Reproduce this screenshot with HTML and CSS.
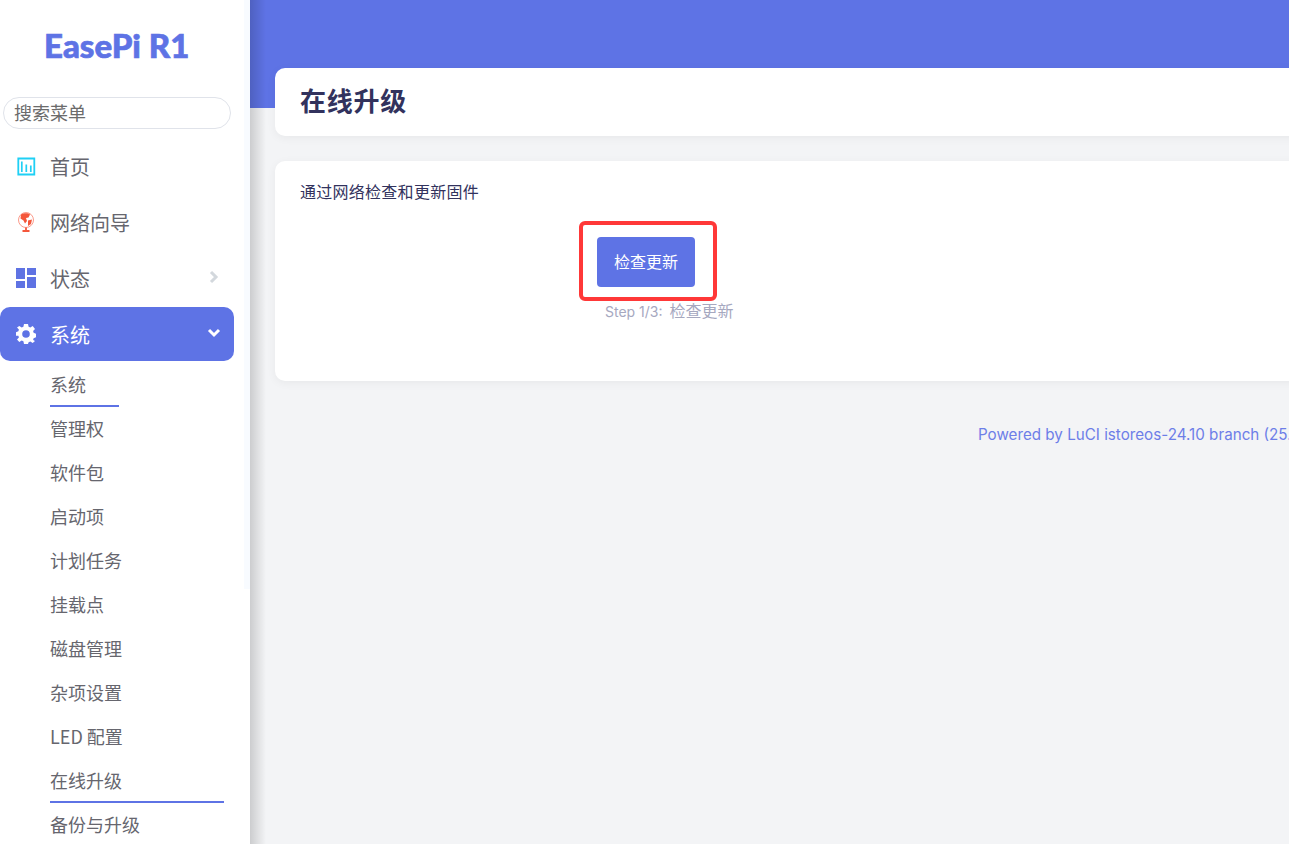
FILE: index.html
```html
<!DOCTYPE html>
<html lang="zh-CN">
<head>
<meta charset="utf-8">
<title>在线升级</title>
<link rel="stylesheet" href="styles.css">
</head>
<body>
<div class="app">
  <aside class="sidebar">
    <div class="brand">EasePi R1</div>
    <div class="search"><input class="search-input" type="text" placeholder="搜索菜单"></div>
    <nav class="menu">
      <a class="item"><span class="ico"><svg width="20" height="19" viewBox="-1.3 -0.5 20 19"><path d="M1 1h16v16H1z" fill="none" stroke="#1fd0f5" stroke-width="1.800"/><path d="M4.500 4v10.500M9 7v7.500M13.500 8v6.500" stroke="#1fd0f5" stroke-width="1.700"/></svg></span>首页</a>
      <a class="item"><span class="ico"><svg width="20" height="20" viewBox="0 0 20 20"><circle cx="10" cy="8" r="7.500" fill="#fff" stroke="#fc9a8a" stroke-width="1"/><path d="M5 2.500C8 .5 13 1 14 2.500L12.500 5.500 10 6l1 3-2 2.500-1.500-3-3-2z" fill="#f4573b"/><path d="M12 8.500l4-1-1 4.500-3 2z" fill="#f4573b"/><path d="M10 15.500v3M6.500 19h7" stroke="#f4573b" stroke-width="1.800"/></svg></span>网络向导</a>
      <a class="item"><span class="ico"><svg width="20" height="20" viewBox="0 0 20 20"><path d="M0 0h9v11H0zM11 0h9v7h-9zM0 13h9v7H0zM11 9h9v11h-9z" fill="#5f73e3"/></svg></span>状态<svg class="chev" width="10" height="14" viewBox="0 0 10 14"><path d="M2 2l5 5-5 5" fill="none" stroke="#d3d8dd" stroke-width="3"/></svg></a>
      <a class="item active"><span class="ico"><svg width="20" height="20" viewBox="0 0 20 20"><path fill="#fff" fill-rule="evenodd" d="M8 0h4l.6 2.800 1.700.7L16.700 2 19 5l-1.900 2.100.5 1.700 2.400.9v3.600l-2.400.9-.5 1.700L19 17l-2.300 2-2.400-1.500-1.700.7L12 20H8l-.6-2.800-1.700-.7L3.300 18 1 15.500l1.900-2.100-.5-1.700L0 11.800V8.200l2.400-.9.5-1.700L1 3.500 3.300 2l2.400 1.500 1.700-.7zM10 6.200a3.800 3.800 0 1 0 0 7.600 3.800 3.800 0 0 0 0-7.600z"/></svg></span>系统<svg class="chev down" width="14" height="10" viewBox="0 0 14 10"><path d="M2 2l5 5 5-5" fill="none" stroke="#fff" stroke-width="3"/></svg></a>
    </nav>
    <ul class="sub">
      <li class="short"><a>系统</a></li>
      <li><a>管理权</a></li>
      <li><a>软件包</a></li>
      <li><a>启动项</a></li>
      <li><a>计划任务</a></li>
      <li><a>挂载点</a></li>
      <li><a>磁盘管理</a></li>
      <li><a>杂项设置</a></li>
      <li><a>LED 配置</a></li>
      <li class="current"><a>在线升级</a></li>
      <li><a>备份与升级</a></li>
    </ul>
  </aside>
  <div class="gutter"><div class="thumb"></div></div>
  <main class="main">
    <div class="banner"></div>
    <div class="content">
      <header class="title-card"><h1>在线升级</h1></header>
      <section class="card">
        <p class="desc">通过网络检查和更新固件</p>
        <div class="action">
          <button class="btn" type="button">检查更新</button>
          <span class="mark"></span>
          <div class="step">Step 1/3: <span class="step-cjk">检查更新</span></div>
        </div>
      </section>
      <footer class="foot">Powered by LuCI istoreos-24.10 branch (25.0.0)</footer>
    </div>
  </main>
</div>
</body>
</html>
```
FILE: styles.css
```css
* { box-sizing: border-box; }
html, body { margin: 0; height: 100%; overflow: hidden; }
body { font-family: "Inter", "Noto Sans CJK SC", sans-serif; background: #f3f4f6; }
.app { display: flex; height: 844px; width: 1289px; overflow: hidden; }
.sidebar { width: 244px; flex: none; background: #fff; padding-top: 25px; overflow: hidden; }
.gutter { width: 6px; flex: none; background: #fff; }
.thumb { height: 589px; background: #f8fbff; }
.brand { height: 44px; line-height: 40px; padding-left: 44px; font-family: "Lato", "Noto Sans CJK SC", sans-serif; font-weight: 900; font-size: 33px; color: #5e73e5; -webkit-text-stroke: 0.7px #5e73e5; }
.search { padding: 28px 0 0 3px; height: 60px; }
.search-input { width: 228px; height: 32px; border: 1px solid #e0e3ea; border-radius: 16px; padding: 0 10px 2px; font: 18px "Noto Sans CJK SC", sans-serif; outline: none; background: #fff; }
.search-input::placeholder { color: #6b6b6b; opacity: 1; }
.menu { padding: 10px 10px 0 0; margin-top: 0; }
.item { display: flex; align-items: center; height: 54px; margin-bottom: 2px; padding-left: 16px; font-size: 20px; color: #66666e; border-radius: 10px; position: relative; font-family: "Noto Sans CJK SC", sans-serif; }
.ico { width: 34px; display: flex; align-items: center; flex: none; }
.chev { position: absolute; right: 15px; top: 19px; }
.chev.down { right: 13px; top: 21px; }
.active { background: #5e73e5; color: #fff; }
.sub { list-style: none; margin: 0; padding: 0 0 0 50px; }
.sub li { height: 44px; font: 18px/42px "Noto Sans CJK SC", sans-serif; color: #66666e; position: relative; margin-right: 20px; }
.sub a { display: block; height: 44px; }
.sub .short { width: 69px; }
.short::after, .current::after { content: ""; position: absolute; left: 0; right: 0; bottom: 0; height: 2px; background: #5e73e5; }
.main { flex: 1; min-width: 0; position: relative; background: #f3f4f6; }
.main::after { content: ""; position: absolute; inset: 0 auto 0 0; width: 16px; background: linear-gradient(90deg, rgba(0,0,0,.16), rgba(0,0,0,0)); pointer-events: none; }
.banner { height: 108px; background: #5e73e5; }
.content { margin-top: -40px; padding-left: 25px; width: 1100px; position: relative; }
.title-card { height: 68px; background: #fff; border-radius: 10px 0 0 10px; padding: 0 0 5px 25px; display: flex; align-items: center; box-shadow: 0 2px 10px rgba(0,0,0,.05); }
h1 { margin: 0; font: 700 26px "Noto Sans CJK SC", sans-serif; color: #32325d; letter-spacing: 0.75px; }
.card { margin-top: 25px; height: 220px; background: #fff; border-radius: 10px 0 0 10px; padding: 19px 25px 0; box-shadow: 0 2px 10px rgba(0,0,0,.05); }
.desc { margin: 0; font: 16px/22px "Noto Sans CJK SC", sans-serif; letter-spacing: 0.27px; color: #32325d; }
.action { position: relative; margin: 35px 0 0 297px; width: 140px; }
.btn { display: block; width: 98px; height: 50px; padding: 0 0 3px; background: #5e73e5; color: #fff; border: 0; border-radius: 4px; font: 16px "Noto Sans CJK SC", sans-serif; }
.mark { position: absolute; left: -18px; top: -16px; width: 138px; height: 80px; border: 4px solid #ff3838; border-radius: 6px; }
.step { margin: 13px 0 0 8px; font-size: 14px; line-height: 20px; color: #a6a8bf; white-space: nowrap; }
.step-cjk { font: 16px/20px "Noto Sans CJK SC", sans-serif; margin-left: 3px; }
.foot { margin-top: 43px; padding-left: 703px; font-size: 15.2px; line-height: 22px; color: #6d7ee8; white-space: nowrap; }
```
